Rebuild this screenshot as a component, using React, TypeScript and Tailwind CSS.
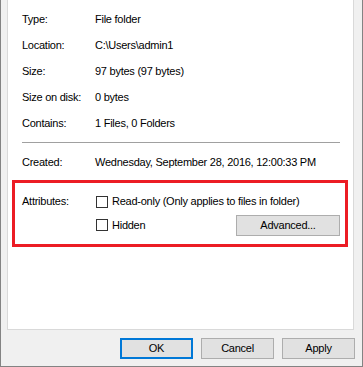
import React from "react";

const font = { fontFamily: '"Liberation Sans", Arial, sans-serif' };

function Row({ label, value }: { label: string; value: string }) {
  return (
    <div className="flex h-[26px] items-center pl-[14px]">
      <div className="w-[73px] shrink-0">{label}</div>
      <div className="whitespace-nowrap">{value}</div>
    </div>
  );
}

function Checkbox() {
  return <div className="h-[12px] w-[12px] shrink-0 border border-[#333333] bg-white" />;
}

function Btn({ children, primary }: { children: React.ReactNode; primary?: boolean }) {
  return (
    <div
      className={
        "flex h-[21px] w-[73px] items-center justify-center bg-[#e1e1e1] " +
        (primary ? "border-2 border-[#0078d7]" : "border border-[#adadad]")
      }
    >
      {children}
    </div>
  );
}

export default function App() {
  return (
    <div
      style={font}
      className="flex h-[367px] w-[363px] flex-col border-x border-b border-[#838383] bg-[#f0f0f0] text-[11px] tracking-[-0.25px] text-black"
    >
      <div className="ml-[6px] mr-[8px] flex h-[330px] flex-col border-x border-b border-[#d9d9d9] bg-white pt-[6px]">
        <Row label="Type:" value="File folder" />
        <Row label="Location:" value="C:\Users\admin1" />
        <Row label="Size:" value="97 bytes (97 bytes)" />
        <Row label="Size on disk:" value="0 bytes" />
        <Row label="Contains:" value="1 Files, 0 Folders" />
        <div className="ml-[14px] mr-[13px] mt-[6px] h-px bg-[#a0a0a0]" />
        <div className="mt-[6px]">
          <Row label="Created:" value="Wednesday, September 28, 2016, 12:00:33 PM" />
        </div>
        <div className="ml-[4px] mr-[5px] mt-[5px] flex border-[3px] border-[#ec1c24] pb-[8px] pl-[7px] pr-[5px] pt-[12px]">
          <div className="flex h-[13px] w-[73px] shrink-0 items-center">Attributes:</div>
          <div className="flex flex-1 flex-col gap-[7px] pl-[1px]">
            <div className="flex h-[13px] items-center gap-[4px]">
              <Checkbox />
              <span>Read-only (Only applies to files in folder)</span>
            </div>
            <div className="flex h-[21px] items-start">
              <div className="mt-[2px] flex items-center gap-[4px]">
                <Checkbox />
                <span>Hidden</span>
              </div>
              <div className="ml-auto flex h-[21px] w-[104px] items-center justify-center border border-[#adadad] bg-[#e1e1e1]">
                Advanced...
              </div>
            </div>
          </div>
        </div>
      </div>
      <div className="mt-[8px] flex justify-end gap-[8px] pr-[7px]">
        <Btn primary>OK</Btn>
        <Btn>Cancel</Btn>
        <Btn>Apply</Btn>
      </div>
    </div>
  );
}
